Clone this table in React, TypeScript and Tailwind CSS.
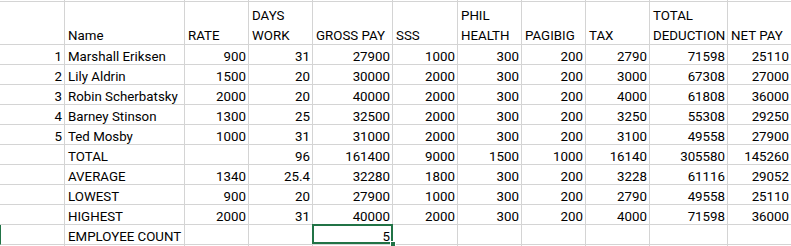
import React from 'react';

const cols =
    'grid grid-cols-[65px_120px_64px_64px_80px_65px_64px_64px_64px_78px_64px]';

type Cell = string | number;

const headers: React.ReactNode[] = [
    '',
    'Name',
    'RATE',
    <>DAYS<br />WORK</>,
    'GROSS PAY',
    'SSS',
    <>PHIL<br />HEALTH</>,
    'PAGIBIG',
    'TAX',
    <>TOTAL<br />DEDUCTION</>,
    'NET PAY',
];

const rows: Cell[][] = [
    [1, 'Marshall Eriksen', 900, 31, 27900, 1000, 300, 200, 2790, 71598, 25110],
    [2, 'Lily Aldrin', 1500, 20, 30000, 2000, 300, 200, 3000, 67308, 27000],
    [3, 'Robin Scherbatsky', 2000, 20, 40000, 2000, 300, 200, 4000, 61808, 36000],
    [4, 'Barney Stinson', 1300, 25, 32500, 2000, 300, 200, 3250, 55308, 29250],
    [5, 'Ted Mosby', 1000, 31, 31000, 2000, 300, 200, 3100, 49558, 27900],
    ['', 'TOTAL', '', 96, 161400, 9000, 1500, 1000, 16140, 305580, 145260],
    ['', 'AVERAGE', 1340, 25.4, 32280, 1800, 300, 200, 3228, 61116, 29052],
    ['', 'LOWEST', 900, 20, 27900, 1000, 300, 200, 2790, 49558, 25110],
    ['', 'HIGHEST', 2000, 31, 40000, 2000, 300, 200, 4000, 71598, 36000],
    ['', 'EMPLOYEE COUNT', '', '', 5, '', '', '', '', '', ''],
];

const EmptyRow = ({ height, bottom }: { height: string; bottom: boolean }) => (
    <div className={cols}>
        {headers.map((_, i) => (
            <div
                key={i}
                className={`${height} border-r border-[#d4d4d4] ${bottom ? 'border-b' : ''}`}
            />
        ))}
    </div>
);

const App = () => {
    return (
        <div className="w-[791px] h-[246px] overflow-hidden bg-white text-black font-['Roboto',sans-serif] text-[13.3px]">
            <EmptyRow height="h-[2px]" bottom />

            {/* header row, wrapped text sits at the bottom */}
            <div className={cols}>
                {headers.map((h, i) => (
                    <div
                        key={i}
                        className="h-[43px] flex items-end border-r border-b border-[#d4d4d4] px-[3px]"
                    >
                        <span className="leading-[20px] mb-[-2px] whitespace-nowrap">
                            {h}
                        </span>
                    </div>
                ))}
            </div>

            {rows.map((row, r) => (
                <div key={r} className={cols}>
                    {row.map((v, i) => {
                        const isText = typeof v === 'string';
                        const selected = r === rows.length - 1 && i === 4;
                        const rowMark = r === rows.length - 1 && i === 0;
                        return (
                            <div
                                key={i}
                                className={`h-[20px] flex items-end border-r border-b border-[#d4d4d4] ${
                                    isText ? 'justify-start pl-[3px]' : 'justify-end pr-[2px]'
                                } ${selected ? 'relative' : ''} ${
                                    rowMark ? 'border-l border-l-[#217346]' : ''
                                }`}
                            >
                                <span className="leading-[15px] whitespace-nowrap">{v}</span>
                                {selected && (
                                    <>
                                        <div className="absolute left-[-1px] top-[-1px] right-[-1px] bottom-0 border-2 border-[#217346]" />
                                        <div className="absolute right-[-4px] bottom-[-3px] w-[6px] h-[6px] bg-[#217346] border border-white" />
                                    </>
                                )}
                            </div>
                        );
                    })}
                </div>
            ))}

            <EmptyRow height="h-[3px]" bottom={false} />
        </div>
    );
};

export default App;
